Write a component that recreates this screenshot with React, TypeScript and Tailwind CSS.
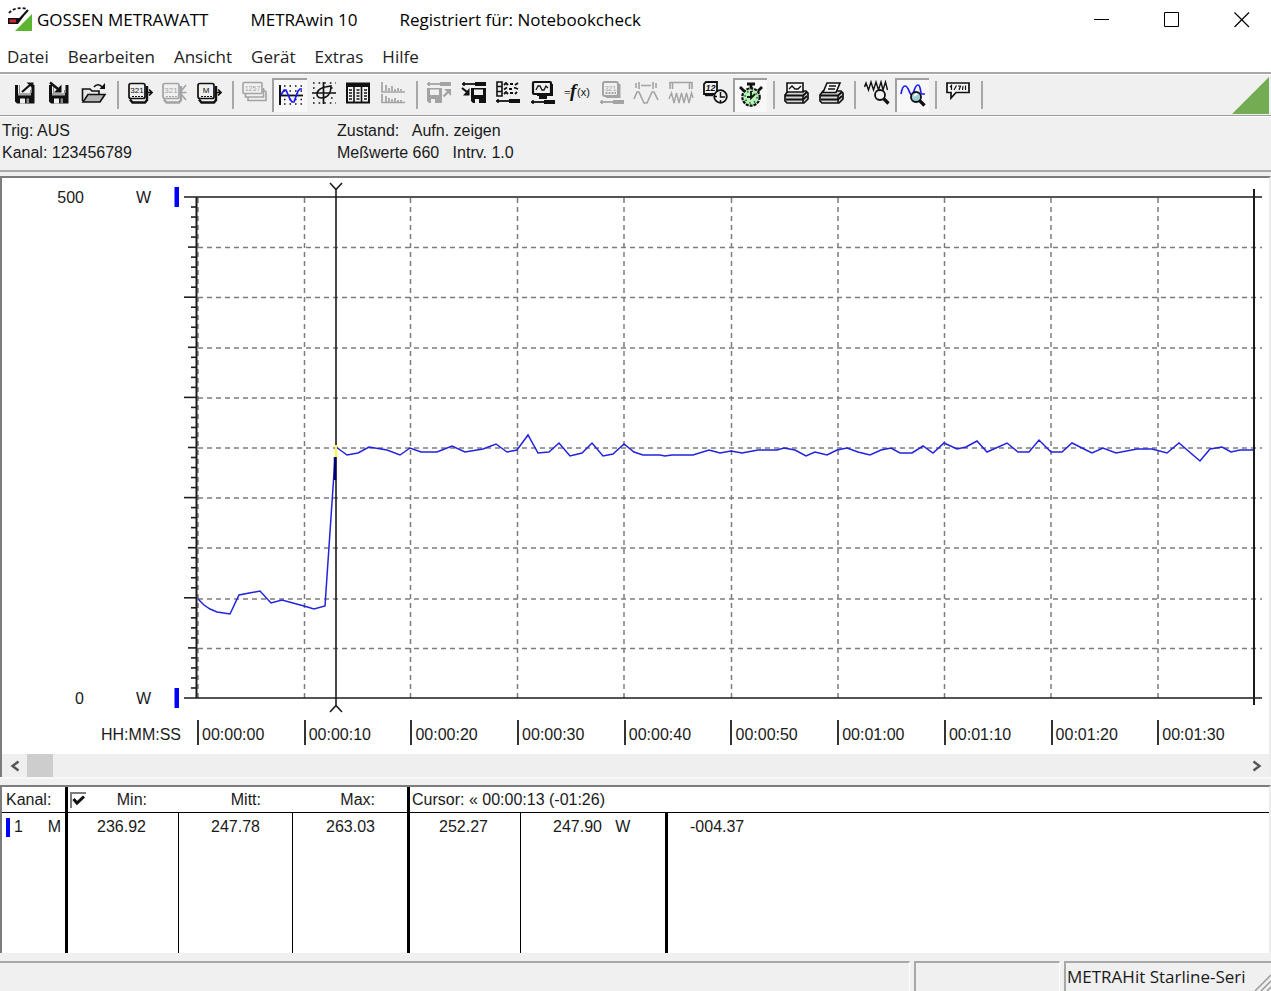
import React from "react";

const K = "#111111";
const G = "#a3a3a3";
const B = "#1a1aff";

function Icon({ children }: { children: React.ReactNode }) {
  return (
    <svg width="26" height="26" viewBox="0 0 26 26" fill="none" className="shrink-0" aria-hidden="true">
      {children}
    </svg>
  );
}

function Floppy({ into = false }: { into?: boolean }) {
  return (
    <Icon>
      <path d="M3 5H6V13H19.5V5H22.5V23.5H5L3 21.5Z" fill={K} />
      <path d="M7 5H8V13H7ZM18 10H19V13H18Z" fill="#8a8a8a" />
      <path d="M6 13H19V15.5H6Z" fill="#a8a8a8" />
      <path d="M8 18.500H13V23.500H8Z" fill="#f0f0f0" />
      <path d="M14.500 18.500H17V23.500H14.500Z" fill="#8a8a8a" />
      {into ? (
        <>
          <path d="M4 2.500L12 9" stroke={K} strokeWidth="2.600" />
          <path d="M15.500 4.500V12.500H8Z" fill={K} />
        </>
      ) : (
        <>
          <path d="M10 12L18 5" stroke={K} strokeWidth="2.200" />
          <path d="M14.500 2.500H21.500V9Z" fill={K} />
        </>
      )}
    </Icon>
  );
}

function FolderOpen() {
  return (
    <Icon>
      <path d="M1.5 21V9H9L11 11H18V14" stroke={K} strokeWidth="1.6" fill="#e6e6e6" />
      <path d="M2 22L7 14.5H24L19 22Z" fill="#b5b5b5" stroke={K} strokeWidth="1.6" />
      <path d="M13 7C15 4 19 4 21 7" stroke={K} strokeWidth="1.6" />
      <path d="M24 3V9H18.500Z" fill={K} />
    </Icon>
  );
}

function Device({ label, color, arrow }: { label: string; color: string; arrow: "out" | "in" }) {
  return (
    <Icon>
      <rect x="2" y="3.500" width="16" height="15" rx="2" fill="#f0f0f0" stroke={color} strokeWidth="1.700" />
      <path d="M3 19.500L5.500 22.500H18L20 20V6" stroke={color} strokeWidth="2.400" />
      <path d="M5 16.500H16" stroke={color} strokeWidth="1" strokeDasharray="2 1" />
      <text x="10" y="13" textAnchor="middle" fontSize="8" fill={color} fontFamily="Liberation Sans, sans-serif">
        {label}
      </text>
      {arrow === "out" && <path d="M20 12.500H25M22 9.500L25 12.500L22 15.500" stroke={color} strokeWidth="1.700" />}
      {arrow === "in" && <path d="M20 12.500H25.500M25 5L21 10M25 20L21 15" stroke={color} strokeWidth="1.600" />}
    </Icon>
  );
}

function StackedDisplays() {
  return (
    <Icon>
      <path d="M6 17V20.5H24V12L22 10" stroke={G} strokeWidth="1.6" />
      <path d="M3.5 13V17H21.5V8" stroke={G} strokeWidth="1.6" />
      <rect x="1" y="2.500" width="19" height="11" rx="1" fill="#f0f0f0" stroke={G} strokeWidth="1.600" />
      <text x="10.500" y="10.500" textAnchor="middle" fontSize="7" fill={G} fontFamily="Liberation Sans, sans-serif">
        1257
      </text>
    </Icon>
  );
}

function CurveChart() {
  return (
    <Icon>
      <path d="M6 4H25M6 9H25M6 17.5H25M6 22H25" stroke={K} strokeWidth="1.5" strokeDasharray="1.5 4" />
      <path d="M2 3V23" stroke={K} strokeWidth="2" />
      <path d="M1 13.5H25" stroke={K} strokeWidth="1.8" />
      <path d="M3 13L6 8H8L12 17L14 20H16L20 9L22 7H24" stroke={B} strokeWidth="1.7" />
    </Icon>
  );
}

function CrosshairPlot() {
  return (
    <Icon>
      <path d="M2 3H25M2 23H25M2 8H6M20 8H25M2 18H6M20 18H25" stroke={K} strokeWidth="1.6" strokeDasharray="1.6 4" />
      <path d="M12.5 2V24M1 13H25" stroke={K} strokeWidth="1.7" />
      <path d="M6 14C6 10 11 7 20 6C20 13 17 18 11 18C8 18 6 17 6 14Z" stroke={K} strokeWidth="1.6" />
    </Icon>
  );
}

function DataTable() {
  return (
    <Icon>
      <rect x="2" y="3.5" width="22" height="19" fill="#f4f4f4" stroke={K} strokeWidth="2" />
      <path d="M2 5.5H24" stroke={K} strokeWidth="3" />
      <path d="M9 4V22M16.5 4V22" stroke={K} strokeWidth="1.6" />
      <path d="M4 10H7M4 13H7M4 16H7M4 19H7M11.500 10H14.500M11.500 13H14.500M11.500 16H14.500M11.500 19H14.500M19 10H22M19 13H22M19 16H22M19 19H22" stroke={K} strokeWidth="1.300" />
    </Icon>
  );
}

function BarGraphs() {
  return (
    <Icon>
      <path d="M2 2V12H25M2 14V22.5H25" stroke={G} strokeWidth="1.7" />
      <path d="M6 5V11M9 8V11M12 6V11M15 9V11M18 8V11M21 9V11M6 16V22M9 18V22M12 19V22M15 18V22M18 20V22M21 20V22" stroke={G} strokeWidth="1.7" />
    </Icon>
  );
}

function Driver({ y, color }: { y: number; color: string }) {
  return (
    <>
      <path d={`M1 ${y}H14`} stroke={color} strokeWidth="1.8" />
      <path d={`M14 ${y}H25`} stroke={color} strokeWidth="4" />
      <path d={`M3 ${y - 2}V${y + 2}`} stroke={color} strokeWidth="1.6" />
    </>
  );
}

function DiskSetup({ color, into }: { color: string; into: boolean }) {
  return (
    <Icon>
      <Driver y={4} color={color} />
      {into ? (
        <>
          <path d="M10 8H25V23H12L10 21Z" fill={color} />
          <path d="M13 9.500H22V15H13ZM14 19H18V23H14Z" fill="#f0f0f0" />
          <path d="M1 8L6 12" stroke={color} strokeWidth="2.200" />
          <path d="M8.500 8V15.500H2Z" fill={color} />
        </>
      ) : (
        <>
          <path d="M1 8H16V23H3L1 21Z" fill={color} />
          <path d="M4 9.500H13V15H4ZM5 19H9V23H5Z" fill="#f0f0f0" />
          <path d="M17.500 16.500L22 12" stroke={color} strokeWidth="2.400" />
          <path d="M18 9H25V16Z" fill={color} />
        </>
      )}
    </Icon>
  );
}

function ChannelSetup() {
  return (
    <Icon>
      <path d="M2 2H7V16H2ZM2 6.5H7M2 11.5H7" stroke={K} strokeWidth="1.6" />
      <path d="M9 5L11 3L13 5M15 4H18M20 5L23 3M9 9.500L12 7.500M14 9H17M19 7.500L23 9M9 14L11 12L13 14M15 13H18M20 14L22 12" stroke={K} strokeWidth="1.800" />
      <Driver y={21} color={K} />
    </Icon>
  );
}

function MonitorSetup() {
  return (
    <Icon>
      <rect x="3" y="2" width="18" height="12" rx="1" fill="#f0f0f0" stroke={K} strokeWidth="2.2" />
      <path d="M22 4V15H7" stroke={K} strokeWidth="2" />
      <path d="M6 10L8 6H10L12 10H14L16 6L18 8" stroke={K} strokeWidth="1.3" />
      <path d="M9 16H17V19H9Z" fill={K} />
      <Driver y={22} color={K} />
    </Icon>
  );
}

function Formula() {
  return (
    <Icon>
      <text x="0" y="17" fontSize="12" fill={K} fontFamily="Liberation Serif, serif">=</text>
      <text x="6" y="17" fontSize="19" fontWeight="700" fontStyle="italic" fill={K} fontFamily="Liberation Serif, serif">f</text>
      <text x="13" y="16" fontSize="11" fill={K} fontFamily="Liberation Sans, sans-serif">(x)</text>
    </Icon>
  );
}

function DeviceSetup() {
  return (
    <Icon>
      <rect x="4" y="2" width="15" height="14" rx="2" stroke={G} strokeWidth="2" />
      <path d="M20.5 4V17H7" stroke={G} strokeWidth="2" />
      <text x="11.500" y="10.500" textAnchor="middle" fontSize="7" fill={G} fontFamily="Liberation Sans, sans-serif">321</text>
      <path d="M6.5 13H17" stroke={G} strokeWidth="2" strokeDasharray="2 1" />
      <Driver y={22} color={G} />
    </Icon>
  );
}

function WaveSection() {
  return (
    <Icon>
      <path d="M6 2V9M20 2V9M8 5.5H18M3 3V8M23 3V8" stroke={G} strokeWidth="1.6" />
      <path d="M1 19L4 12H6L11 23H14L19 12H21L25 20" stroke={G} strokeWidth="1.6" />
    </Icon>
  );
}

function WaveDense() {
  return (
    <Icon>
      <path d="M2 9V2.5H24V9M4.500 3V9M21.500 3V9" stroke={G} strokeWidth="1.6" />
      <path d="M1 19L3.500 13L6 23L8.500 13L11 23L13.500 13L16 23L18.500 13L21 23L23.500 13L25 18" stroke={G} strokeWidth="1.400" />
    </Icon>
  );
}

function DeviceClock() {
  return (
    <Icon>
      <path d="M4 2H15V14H2V4Z" fill="#f0f0f0" stroke={K} strokeWidth="1.800" />
      <path d="M3 15H11" stroke={K} strokeWidth="2.4" />
      <text x="8.500" y="11" textAnchor="middle" fontSize="9" fontWeight="700" fontStyle="italic" fill={K} fontFamily="Liberation Sans, sans-serif">12</text>
      <circle cx="18.500" cy="16.500" r="6.300" fill="#f4f4f4" stroke={K} strokeWidth="1.800" />
      <path d="M18.500 12V17H23M18.500 20V22M13 16.500H15" stroke={K} strokeWidth="1.500" />
    </Icon>
  );
}

function Stopwatch() {
  return (
    <Icon>
      <path d="M9 2H17M13 2V7M2 5L6 9M24 5L20 9" stroke={K} strokeWidth="2.8" />
      <circle cx="13" cy="15" r="8.700" fill="#b9f2b9" stroke={K} strokeWidth="2.200" strokeDasharray="3 1" />
      <circle cx="13" cy="15" r="6" stroke="#1d6b2a" strokeWidth="1.600" strokeDasharray="1.500 3.200" />
      <path d="M13 9V16L17 12M9 15H13" stroke={K} strokeWidth="1.800" />
    </Icon>
  );
}

function PrinterIcon({ curve }: { curve: boolean }) {
  return (
    <Icon>
      <path d="M2 15L5 11H23L25 13V19L21 23H4L2 21Z" fill="#d6d6d6" stroke={K} strokeWidth="1.700" />
      <path d="M2 15.500H20L24 12M3 19.500H20L24 16" stroke={K} strokeWidth="2" />
      <path d="M20 16V23" stroke={K} strokeWidth="1.600" />
      {curve ? (
        <>
          <path d="M4 3H20V12H4Z" fill="#f8f8f8" stroke={K} strokeWidth="1.600" />
          <path d="M6 9L9 6L12 9L15 9L18 6" stroke={K} strokeWidth="1.400" />
        </>
      ) : (
        <>
          <path d="M9 3H22L18 12.500H5Z" fill="#f8f8f8" stroke={K} strokeWidth="1.600" />
          <path d="M11 6H18M10 9H17" stroke={K} strokeWidth="1.400" />
        </>
      )}
    </Icon>
  );
}

function ZoomWave({ blue }: { blue: boolean }) {
  return (
    <Icon>
      {blue ? (
        <path d="M1 12C2 6 3 4 5 4C9 4 9 13 12 13C14 13 14 3 18 3C21 3 20 12 22 12H25" stroke={B} strokeWidth="1.700" />
      ) : (
        <path d="M0.500 7L2 3L4.500 10L7 2L9.500 10L12 2L14.500 10L17 2L19 10L21.500 2L23.500 10" stroke={K} strokeWidth="1.400" />
      )}
      <path d="M19.500 18.500L24.500 23.500" stroke={K} strokeWidth="3.200" />
      <circle cx="16" cy="15" r="5" fill={blue ? "#9fd0d8" : "#f4f4f4"} stroke={K} strokeWidth="1.800" />
      {blue && <path d="M14 14L17 11.500" stroke="#ffffff" strokeWidth="1.800" />}
    </Icon>
  );
}

function CommentIcon() {
  return (
    <Icon>
      <path d="M2 3H24V12.500H11L6 18V12.500H2Z" fill="#f8f8f8" stroke={K} strokeWidth="1.700" />
      <path d="M5 7L6.500 5.500V10M9 10L11.500 5.500M13 6H15.500L14 10M18 6L17.500 10M20.500 5.500V10" stroke={K} strokeWidth="1.200" />
    </Icon>
  );
}

type Tool = { name: string; icon: React.ReactNode; pressed?: boolean; disabled?: boolean };
type Group = { width: string; tools: Tool[] };

const groups: Group[] = [
  {
    width: "w-[103px] grid-cols-3",
    tools: [
      { name: "Speichern", icon: <Floppy /> },
      { name: "Laden", icon: <Floppy into /> },
      { name: "Öffnen", icon: <FolderOpen /> },
    ],
  },
  {
    width: "w-[103px] grid-cols-3",
    tools: [
      { name: "Gerät lesen", icon: <Device label="321" color={K} arrow="out" /> },
      { name: "Gerät anhalten", icon: <Device label="321" color={G} arrow="in" />, disabled: true },
      { name: "Speicher lesen", icon: <Device label="M" color={K} arrow="out" /> },
    ],
  },
  {
    width: "w-[172px] grid-cols-5",
    tools: [
      { name: "Digitalanzeige", icon: <StackedDisplays />, disabled: true },
      { name: "Y(t)-Schreiber", icon: <CurveChart />, pressed: true },
      { name: "XY-Schreiber", icon: <CrosshairPlot /> },
      { name: "Tabelle", icon: <DataTable /> },
      { name: "Balken", icon: <BarGraphs />, disabled: true },
    ],
  },
  {
    width: "w-[345px] grid-cols-10",
    tools: [
      { name: "Einstellung speichern", icon: <DiskSetup color={G} into={false} />, disabled: true },
      { name: "Einstellung laden", icon: <DiskSetup color={K} into /> },
      { name: "Kanäle einstellen", icon: <ChannelSetup /> },
      { name: "Anzeige einstellen", icon: <MonitorSetup /> },
      { name: "Formel", icon: <Formula /> },
      { name: "Gerät einstellen", icon: <DeviceSetup />, disabled: true },
      { name: "Bereich dehnen", icon: <WaveSection />, disabled: true },
      { name: "Bereich stauchen", icon: <WaveDense />, disabled: true },
      { name: "Gerätezeit", icon: <DeviceClock /> },
      { name: "Aufnahme", icon: <Stopwatch />, pressed: true },
    ],
  },
  {
    width: "w-[69px] grid-cols-2",
    tools: [
      { name: "Kurve drucken", icon: <PrinterIcon curve /> },
      { name: "Drucken", icon: <PrinterIcon curve={false} /> },
    ],
  },
  {
    width: "w-[69px] grid-cols-2",
    tools: [
      { name: "Gesamtansicht", icon: <ZoomWave blue={false} /> },
      { name: "Zoom", icon: <ZoomWave blue />, pressed: true },
    ],
  },
  { width: "w-[34px] grid-cols-1", tools: [{ name: "Kommentar", icon: <CommentIcon /> }] },
];

const menus = ["Datei", "Bearbeiten", "Ansicht", "Gerät", "Extras", "Hilfe"];

const times = [
  "00:00:00", "00:00:10", "00:00:20", "00:00:30", "00:00:40",
  "00:00:50", "00:01:00", "00:01:10", "00:01:20", "00:01:30",
];

const gridX = [198, 304.5, 410.5, 517.5, 624, 731.5, 838, 944.5, 1051, 1158];
const gridY = [247.5, 297.5, 348, 398, 448, 498, 548, 599, 648.5];

const trace =
  "198,599 204,605 210,609 217,612 230,614 239,595 260,591 271,603 282,600 304,606 314,609 325,606 335,458";
const traceAfter =
  "336,447 347,455 358,453 369,447 387,450 400,455 410,448 421,452 437,452 452,446 465,452 483,449 496,444 507,452 517,450 528,435 538,453 549,452 559,443 570,456 582,453 592,443 603,456 613,454 624,444 634,452 643,455 660,455 665,456 672,455 693,455 709,450 720,453 731,451 742,453 758,450 777,450 784,448 795,450 806,456 815,452 827,455 837,450 847,448 858,452 870,455 881,450 891,448 900,453 912,453 923,446 933,453 944,443 957,449 966,447 977,441 987,452 1007,443 1018,452 1029,452 1039,440 1051,452 1062,452 1072,443 1082,448 1092,453 1103,448 1116,453 1137,449 1152,449 1167,453 1179,443 1200,461 1210,449 1222,447 1231,452 1240,450 1253,450";

function Plot() {
  const ticks = Array.from({ length: 49 }, (_, i) => i + 1);
  return (
    <svg
      className="h-[537px] min-w-0 flex-1"
      viewBox="170 178 1099 537"
      preserveAspectRatio="none"
      fill="none"
      role="img"
      aria-label="Leistung in Watt über der Zeit"
    >
      <g stroke="#7c7c7c" strokeWidth="1.5" strokeDasharray="5 4">
        {gridX.map((x) => (
          <path key={x} d={`M${x} 198V698`} />
        ))}
        {gridY.map((y) => (
          <path key={y} d={`M198 ${y}H1262`} />
        ))}
      </g>
      <g stroke="#1c1c1c" strokeWidth="1.6">
        {ticks.map((i) => (
          <path key={i} d={`M${i % 10 === 0 ? 184 : i % 5 === 0 ? 188 : 191} ${698 - i * 10.02}H197`} />
        ))}
        <path d="M184 197H1262M184 698H1262" />
        <path d="M196.500 197V698" strokeWidth="2" />
        <path d="M1254 189V705" strokeWidth="2" />
      </g>
      <path d="M174.500 187H179V207H174.500ZM174.500 688H179V708H174.500Z" fill="#0000ff" />
      <polyline points={trace} stroke="#2222e0" strokeWidth="1.5" />
      <polyline points={traceAfter} stroke="#2222e0" strokeWidth="1.5" />
      <path d="M330 183L336 189.500L342 183M336 189V706M330 712L336 705.500L342 712" stroke="#1c1c1c" strokeWidth="1.600" />
      <path d="M335 457V480" stroke="#000070" strokeWidth="2.500" />
      <path d="M336 445V457" stroke="#ffff30" strokeWidth="2" />
    </svg>
  );
}

function AxisLabel({ value, className }: { value: string; className: string }) {
  return (
    <div className={`flex items-center ${className}`}>
      <span className="w-[82px] text-right">{value}</span>
      <span className="w-[67px] text-right">W</span>
    </div>
  );
}

export default function App() {
  return (
    <div className="flex min-h-screen flex-col overflow-hidden bg-[#f0f0f0] font-['Liberation_Sans',Arial,sans-serif] text-[16px] leading-[22px] text-[#1a1a1a]">
      <header className="flex h-10 items-center bg-white pl-[7px] font-['Open_Sans',sans-serif] text-[17px] text-black">
        <svg width="26" height="26" viewBox="0 0 26 26" fill="none" className="mr-1 shrink-0" aria-hidden="true">
          <path d="M25 7V24H8Z" fill="#5cb531" />
          <path d="M1 11H13L17 9L11 17H1Z" fill="#111" />
          <path d="M2.500 12.500H9V15.500H2.500Z" fill="#d8232a" />
          <path d="M11 14L21 3" stroke="#111" strokeWidth="2" />
          <path d="M2 6C6 1 14 0 20 2" stroke="#111" strokeWidth="1.800" strokeDasharray="3 2" />
        </svg>
        <h1 className="flex min-w-0 flex-1 gap-[42px] whitespace-nowrap">
          <span>GOSSEN METRAWATT</span>
          <span>METRAwin 10</span>
          <span>Registriert für: Notebookcheck</span>
        </h1>
        <div className="flex gap-3">
          <button aria-label="Minimieren" className="flex h-10 w-[58px] items-center justify-center">
            <svg width="16" height="16" viewBox="0 0 16 16" fill="none" stroke="#000"><path d="M0 7.500H15" /></svg>
          </button>
          <button aria-label="Maximieren" className="flex h-10 w-[58px] items-center justify-center">
            <svg width="16" height="16" viewBox="0 0 16 16" fill="none" stroke="#000"><path d="M0.500 0.500H14.500V14.500H0.500Z" /></svg>
          </button>
          <button aria-label="Schließen" className="flex h-10 w-[58px] items-center justify-center">
            <svg width="16" height="16" viewBox="0 0 16 16" fill="none" stroke="#000" strokeWidth="1.200"><path d="M0.500 0.500L15 15M15 0.500L0.500 15" /></svg>
          </button>
        </div>
      </header>

      <nav className="flex h-[34px] items-center gap-[19px] border-b-2 border-[#a8a8a8] bg-white pt-[2px] pl-[7px] font-['Open_Sans',sans-serif] text-[17px] text-[#222]">
        {menus.map((m) => (
          <button key={m}>{m}</button>
        ))}
      </nav>

      <div role="toolbar" aria-label="Werkzeuge" className="flex h-[42px] items-center border-t border-b border-t-white border-b-[#9c9c9c] pl-2">
        {groups.map((g, i) => (
          <React.Fragment key={i}>
            <div className={`grid h-[34px] shrink-0 ${g.width}`}>
              {g.tools.map((t) => (
                <button
                  key={t.name}
                  aria-label={t.name}
                  aria-pressed={t.pressed}
                  disabled={t.disabled}
                  className={
                    t.pressed
                      ? "flex h-[34px] items-center justify-center border-t-2 border-l-2 border-[#a0a0a0] bg-[#f8f8f8] pb-[3px]"
                      : "flex h-[34px] items-center justify-center pb-1"
                  }
                >
                  {t.icon}
                </button>
              ))}
            </div>
            <div className="mr-1 ml-[6px] h-7 w-[2px] shrink-0 bg-[#a8a8a8]" />
          </React.Fragment>
        ))}
        <svg width="37" height="37" viewBox="0 0 37 37" className="mr-[2px] ml-auto shrink-0" aria-hidden="true">
          <path d="M37 0V37H0Z" fill="#74ac54" />
        </svg>
      </div>

      <section className="flex h-14 border-t border-b-2 border-t-white border-b-[#a8a8a8] pt-[3px]">
        <div className="w-[337px] shrink-0 pl-[2px]">
          <p>Trig: AUS</p>
          <p>Kanal: 123456789</p>
        </div>
        <div className="whitespace-pre">
          <p>Zustand:   Aufn. zeigen</p>
          <p>Meßwerte 660   Intrv. 1.0</p>
        </div>
      </section>

      <main className="mt-1 border-t-2 border-r-2 border-l-2 border-t-[#7c7c7c] border-r-[#ececec] border-l-[#7c7c7c] bg-white">
        <div className="flex">
          <div className="flex w-[168px] shrink-0 flex-col justify-between">
            <AxisLabel value="500" className="h-10" />
            <AxisLabel value="0" className="h-8" />
          </div>
          <Plot />
        </div>
        <div className="flex h-[39px] items-start pt-[5px]">
          <div className="w-[195px] shrink-0 pr-4 text-right leading-[30px]">HH:MM:SS</div>
          <ol className="mr-[5px] grid min-w-0 flex-1 grid-cols-10">
            {times.map((t) => (
              <li key={t} className="h-[25px] border-l-2 border-[#333] pl-[3px] leading-[30px]">
                {t}
              </li>
            ))}
          </ol>
        </div>
        <div className="flex h-[23px] items-center bg-[#efefef]">
          <button aria-label="Nach links" className="flex h-full w-[25px] items-center justify-center">
            <svg width="10" height="12" viewBox="0 0 10 12" fill="none" stroke="#555" strokeWidth="2.400"><path d="M8.500 1.500L2.500 6L8.500 10.500" /></svg>
          </button>
          <div className="h-full flex-1">
            <div className="h-full w-[26px] bg-[#cdcdcd]" />
          </div>
          <button aria-label="Nach rechts" className="flex h-full w-[25px] items-center justify-center">
            <svg width="10" height="12" viewBox="0 0 10 12" fill="none" stroke="#555" strokeWidth="2.400"><path d="M1.500 1.500L7.500 6L1.500 10.500" /></svg>
          </button>
        </div>
      </main>
      <div className="h-2 border-t-2 border-[#f8f8f8]" />

      <section className="border-t-2 border-r-2 border-l-2 border-t-[#7c7c7c] border-r-[#ececec] border-l-[#7c7c7c] bg-white">
        <table className="w-full table-fixed border-separate border-spacing-0 text-right">
          <colgroup>
            <col className="w-[66px]" />
            <col className="w-[111px]" />
            <col className="w-[114px]" />
            <col className="w-[117px]" />
            <col className="w-[111px]" />
            <col className="w-[147px]" />
            <col />
          </colgroup>
          <thead>
            <tr className="h-[26px]">
              <th className="border-r-3 border-b border-black p-0 pl-1 text-left font-normal">Kanal:</th>
              <th className="border-b border-black p-0 pr-8 font-normal">
                <div className="flex items-center justify-between">
                  <label className="grid h-4 w-[18px] pl-[2px]">
                    <input
                      type="checkbox"
                      defaultChecked
                      aria-label="Statistik anzeigen"
                      className="peer col-start-1 row-start-1 h-4 w-4 appearance-none border-t-2 border-l-2 border-[#7c7c7c]"
                    />
                    <svg
                      width="16"
                      height="16"
                      viewBox="0 0 16 16"
                      fill="none"
                      className="pointer-events-none invisible col-start-1 row-start-1 peer-checked:visible"
                      aria-hidden="true"
                    >
                      <path d="M3.500 7L7 11L14 4.500" stroke="#111" strokeWidth="3" />
                    </svg>
                  </label>
                  <span>Min:</span>
                </div>
              </th>
              <th className="border-b border-black p-0 pr-8 font-normal">Mitt:</th>
              <th className="border-r-3 border-b border-black p-0 pr-8 font-normal">Max:</th>
              <th colSpan={3} className="border-b border-black p-0 pl-[2px] text-left font-normal">
                Cursor: « 00:00:13 (-01:26)
              </th>
            </tr>
          </thead>
          <tbody>
            <tr className="h-[140px] align-top">
              <td className="border-r-3 border-black p-0 pt-[3px]">
                <div className="flex items-center pr-1 pl-1">
                  <span className="mr-1 h-[19px] w-1 bg-[#0000ff]" />
                  <span className="flex-1 text-left">1</span>
                  <span>M</span>
                </div>
              </td>
              <td className="border-r border-black p-0 pt-[3px] pr-8">236.92</td>
              <td className="border-r border-black p-0 pt-[3px] pr-8">247.78</td>
              <td className="border-r-3 border-black p-0 pt-[3px] pr-8">263.03</td>
              <td className="border-r border-black p-0 pt-[3px] pr-8">252.27</td>
              <td className="border-r-3 border-black p-0 pt-[3px] pl-8 text-left whitespace-pre">247.90   W</td>
              <td className="p-0 pt-[3px] pl-[22px] text-left">-004.37</td>
            </tr>
          </tbody>
        </table>
      </section>

      <footer className="mt-2 flex min-h-[29px] flex-1 gap-1 font-['Open_Sans',sans-serif] text-[17px]">
        <div className="min-w-0 flex-1 border-t-2 border-r border-t-[#a8a8a8] border-r-white" />
        <div className="w-[146px] shrink-0 border-t-2 border-r border-l-2 border-[#a8a8a8] border-r-white" />
        <div className="flex w-[207px] shrink-0 items-center justify-between overflow-hidden border-t-2 border-l-2 border-[#a8a8a8] pl-[1px] whitespace-nowrap">
          <span>METRAHit Starline-Seri</span>
          <svg width="18" height="18" viewBox="0 0 18 18" className="-ml-2 shrink-0 self-end" fill="none" stroke="#9a9a9a" strokeWidth="1.500" aria-hidden="true">
            <path d="M2 18L18 2M8 18L18 8M14 18L18 14" />
          </svg>
        </div>
      </footer>
    </div>
  );
}
